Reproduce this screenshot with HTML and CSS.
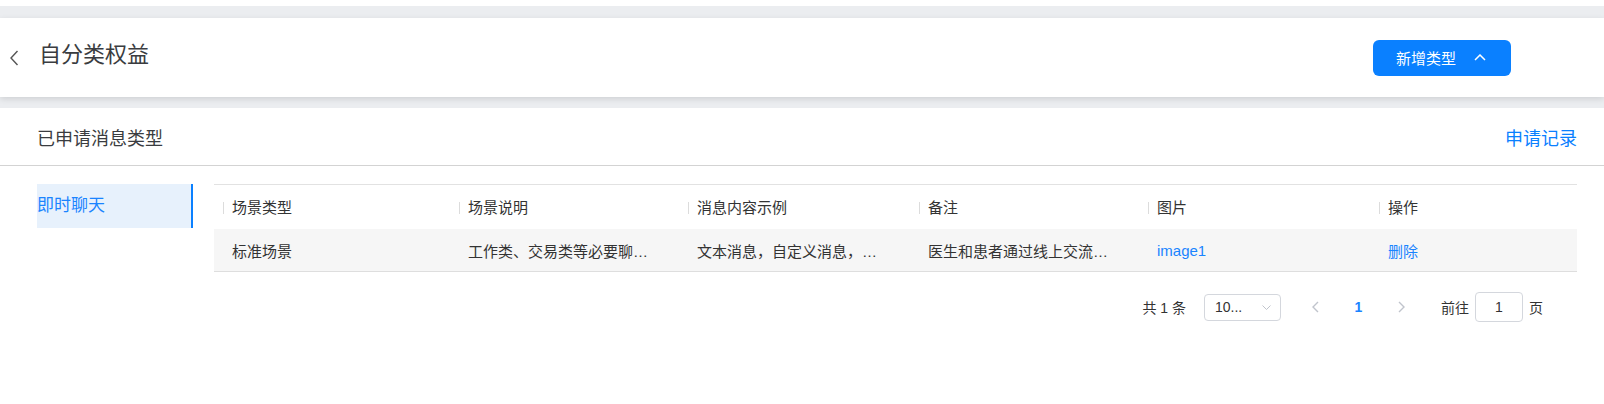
FILE: index.html
```html
<!DOCTYPE html>
<html lang="zh-CN">
<head>
    <meta charset="UTF-8">
    <meta name="viewport" content="width=device-width, initial-scale=1.0">
    <title>自分类权益</title>
    <link rel="stylesheet" href="styles.css">
</head>
<body>

<div class="page-top">
    <div class="header-card">
        <span class="back">
            <svg width="10" height="16" viewBox="0 0 10 16"><path d="M8.5 1 L2 8 L8.5 15" fill="none" stroke="#555" stroke-width="1.4"/></svg>
        </span>
        <h1 class="title">自分类权益</h1>
        <button class="btn-primary">
            新增类型
            <svg width="12" height="7" viewBox="0 0 12 7"><path d="M1 6 L6 1 L11 6" fill="none" stroke="#fff" stroke-width="1.5"/></svg>
        </button>
    </div>
</div>

<div class="content">
    <div class="section-head">
        <span class="section-title">已申请消息类型</span>
        <a class="link" href="#">申请记录</a>
    </div>

    <div class="section-body">
        <div class="sidebar">
            <div class="tab active">即时聊天</div>
        </div>

        <div class="main">
            <table class="data-table">
                <colgroup>
                    <col style="width: 236px">
                    <col style="width: 229px">
                    <col style="width: 231px">
                    <col style="width: 229px">
                    <col style="width: 231px">
                    <col>
                </colgroup>
                <thead>
                    <tr>
                        <th><span class="th-label">场景类型</span></th>
                        <th><span class="th-label">场景说明</span></th>
                        <th><span class="th-label">消息内容示例</span></th>
                        <th><span class="th-label">备注</span></th>
                        <th><span class="th-label">图片</span></th>
                        <th><span class="th-label">操作</span></th>
                    </tr>
                </thead>
                <tbody>
                    <tr>
                        <td>标准场景</td>
                        <td>工作类、交易类等必要聊天沟通场景</td>
                        <td>文本消息，自定义消息，图片消息</td>
                        <td>医生和患者通过线上交流进行问诊咨询</td>
                        <td><a class="cell-link" href="#">image1</a></td>
                        <td><a class="cell-link" href="#">删除</a></td>
                    </tr>
                </tbody>
            </table>

            <div class="pagination">
                <span class="total">共 1 条</span>
                <div class="select">
                    <span class="select-text">10...</span>
                    <svg width="9" height="5" viewBox="0 0 9 5"><path d="M0.5 0.5 L4.5 4.5 L8.5 0.5" fill="none" stroke="#c0c4cc" stroke-width="1"/></svg>
                </div>
                <span class="pager-btn pager-prev">
                    <svg width="7" height="12" viewBox="0 0 7 12"><path d="M6 1 L1 6 L6 11" fill="none" stroke="#c0c4cc" stroke-width="1.4"/></svg>
                </span>
                <span class="pager-btn current">1</span>
                <span class="pager-btn">
                    <svg width="7" height="12" viewBox="0 0 7 12"><path d="M1 1 L6 6 L1 11" fill="none" stroke="#c0c4cc" stroke-width="1.4"/></svg>
                </span>
                <span class="jump">前往</span>
                <input class="jump-input" type="text" value="1">
                <span class="jump-unit">页</span>
            </div>
        </div>
    </div>
</div>

</body>
</html>
```

FILE: styles.css
```css
body {
    font-family: 'Liberation Sans', 'Noto Sans CJK SC', sans-serif;
    margin: 0;
    padding: 0;
    background-color: #fff;
    color: #333;
}
.page-top {
    margin-top: 6px;
    background-color: #ebedf0;
    padding: 12px 0 11px;
}
.header-card {
    display: flex;
    align-items: center;
    height: 79px;
    background-color: #fff;
    box-shadow: 0 2px 6px rgba(0, 0, 0, 0.12);
    padding: 0 93px 0 9px;
}
.back {
    display: flex;
    width: 10px;
    margin-top: 1px;
}
.title {
    margin: 0 0 5px 20px;
    font-size: 22px;
    line-height: 1;
    font-weight: normal;
    color: #3a3c40;
    flex: 1;
}
.btn-primary {
    display: flex;
    align-items: center;
    gap: 18px;
    height: 36px;
    padding: 0 25px 0 23px;
    background-color: #0a80ff;
    color: #fff;
    border: none;
    border-radius: 6px;
    font-family: inherit;
    font-size: 15px;
    cursor: pointer;
}
.content {
    padding: 0 27px 0 37px;
}
.section-head {
    display: flex;
    align-items: center;
    justify-content: space-between;
    height: 57px;
    border-bottom: 1px solid #d3d3d3;
    margin: 0 -27px 0 -37px;
    padding: 0 27px 0 37px;
}
.section-title {
    font-size: 18px;
    color: #3a3c40;
}
.link {
    font-size: 18px;
    color: #0a80ff;
    text-decoration: none;
}
.section-body {
    display: flex;
    gap: 21px;
    padding-top: 18px;
}
.sidebar {
    width: 156px;
    flex-shrink: 0;
}
.tab {
    height: 44px;
    line-height: 44px;
    font-size: 17px;
    color: #333;
}
.tab.active {
    background-color: #e7f1fc;
    color: #1a84ff;
    border-right: 2px solid #0a80ff;
}
.main {
    flex: 1;
}
.data-table {
    width: 100%;
    table-layout: fixed;
    border-collapse: collapse;
    border-top: 1px solid #e2e2e2;
    font-size: 15px;
}
.data-table th {
    height: 44px;
    padding: 0 0 0 9px;
    text-align: left;
    font-weight: normal;
    color: #333;
}
.th-label {
    display: inline-block;
    border-left: 1px solid #dcdcdc;
    padding-left: 8px;
    line-height: 12px;
}
.data-table td {
    height: 42px;
    padding: 0 26px 0 18px;
    background-color: #f6f6f6;
    border-bottom: 1px solid #dedede;
    white-space: nowrap;
    overflow: hidden;
    text-overflow: ellipsis;
    color: #333;
}
.cell-link {
    color: #1a84ff;
    text-decoration: none;
}
.pagination {
    display: flex;
    align-items: center;
    justify-content: flex-end;
    margin-top: 20px;
    padding-right: 34px;
    font-size: 14px;
    color: #333;
}
.total {
    margin-right: 18px;
}
.select {
    display: flex;
    align-items: center;
    justify-content: space-between;
    box-sizing: border-box;
    width: 77px;
    height: 27px;
    padding: 0 9px 0 10px;
    border: 1px solid #d4d7dd;
    border-radius: 4px;
}
.select-text {
    font-size: 14px;
}
.pager-btn {
    display: flex;
    align-items: center;
    justify-content: center;
    width: 43px;
    height: 30px;
}
.pager-prev {
    margin-left: 13px;
}
.pager-btn.current {
    color: #1a84ff;
    font-weight: bold;
}
.jump {
    margin-left: 18px;
}
.jump-input {
    box-sizing: border-box;
    width: 48px;
    height: 30px;
    margin: 0 6px;
    border: 1px solid #d4d7dd;
    border-radius: 4px;
    text-align: center;
    font-family: inherit;
    font-size: 14px;
    color: #333;
    outline: none;
}
```
